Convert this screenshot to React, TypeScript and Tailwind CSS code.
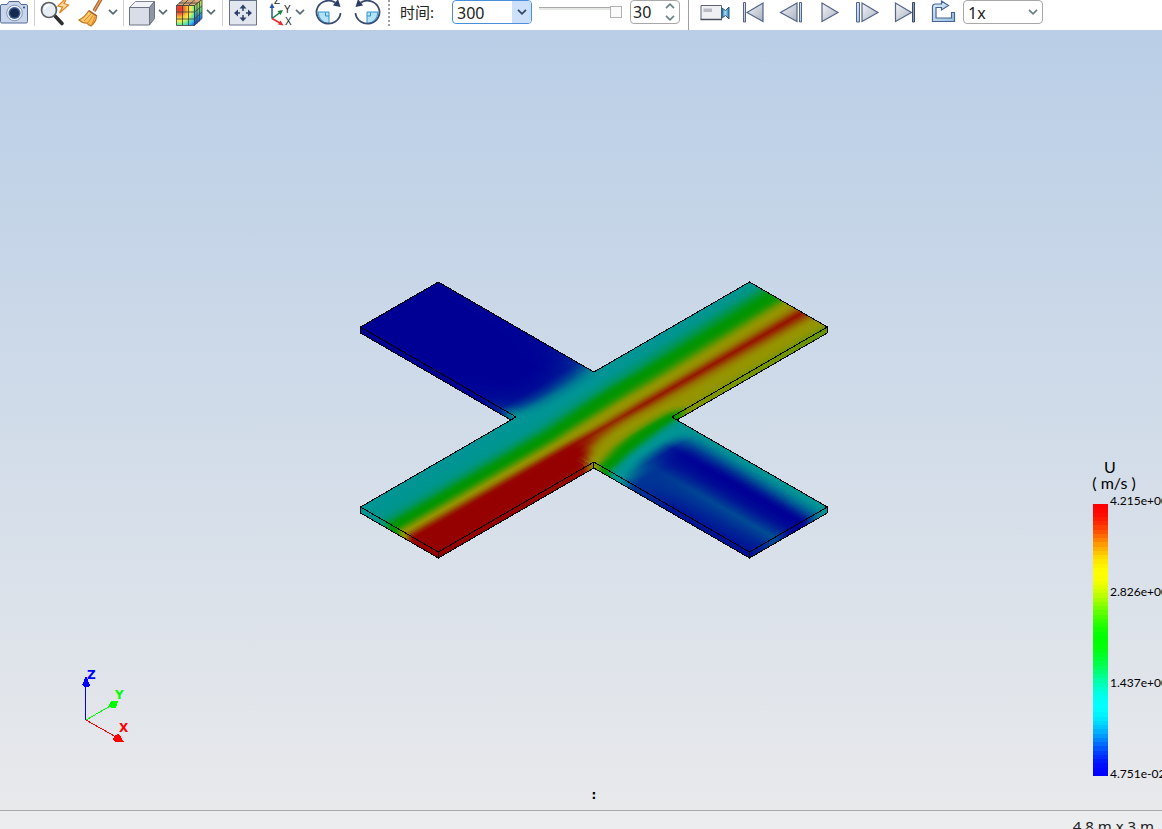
import React from "react";

/* ------------------------------------------------------------------ */
/* Colour map                                                          */
/* ------------------------------------------------------------------ */

function ease(x: number): number {
  return 0.15 * x + 0.85 * (0.5 - 0.5 * Math.cos(Math.PI * x));
}

function rainbow(t: number, peak: number): string {
  const s = Math.max(0, Math.min(1, t)) * 4;
  const seg = Math.min(3, Math.floor(s));
  const f = ease(s - seg);
  const rgb = [
    [0, f, 1],
    [0, 1, 1 - f],
    [f, 1, 0],
    [1, 1 - f, 0],
  ][seg];
  return `rgb(${rgb.map((c) => Math.round(c * peak)).join(",")})`;
}

/* ------------------------------------------------------------------ */
/* Velocity field, tabulated along the inlet channel (u) and across (v) */
/* ------------------------------------------------------------------ */

const CHANNEL_V = [0, 12, 24, 32, 38, 45, 52, 60, 68, 76, 84, 92, 97, 102];
const INLET = [0.26, 0.27, 0.29, 0.35, 0.44, 0.53, 0.66, 0.84, 0.98, 1, 1, 1, 1, 1];
const NEAR_JUNCTION = [0.25, 0.26, 0.29, 0.37, 0.45, 0.53, 0.65, 0.81, 0.97, 1, 1, 1, 0.97, 0.95];
const AFTER_JUNCTION = [0.25, 0.27, 0.35, 0.46, 0.52, 0.6, 0.71, 0.81, 0.94, 0.83, 0.77, 0.74, 0.72, 0.68];
const OUTLET = [0.26, 0.32, 0.44, 0.52, 0.57, 0.68, 0.76, 0.84, 0.95, 0.86, 0.77, 0.73, 0.69, 0.63];

const CENTRE_U = [200, 215, 232, 250, 265, 280, 300];
const CENTRE: [number, number[]][] = [
  [-200, [0, 0, 0, 0, 0, 0, 0]],
  [-90, [0, 0, 0, 0, 0, 0, 0.02]],
  [-45, [0.03, 0.02, 0, 0, 0, 0.02, 0.05]],
  [-20, [0.08, 0.05, 0.04, 0.04, 0.05, 0.06, 0.09]],
  [-8, [0.18, 0.13, 0.11, 0.11, 0.12, 0.13, 0.16]],
  [0, [0.23, 0.2, 0.18, 0.18, 0.18, 0.19, 0.21]],
  [12, [0.26, 0.25, 0.25, 0.25, 0.25, 0.25, 0.26]],
  [24, [0.29, 0.3, 0.31, 0.32, 0.33, 0.34, 0.35]],
  [32, [0.37, 0.38, 0.4, 0.42, 0.44, 0.45, 0.46]],
  [38, [0.45, 0.46, 0.48, 0.49, 0.5, 0.51, 0.52]],
  [45, [0.53, 0.55, 0.56, 0.57, 0.58, 0.59, 0.6]],
  [52, [0.65, 0.67, 0.68, 0.69, 0.7, 0.71, 0.71]],
  [60, [0.81, 0.8, 0.79, 0.79, 0.8, 0.8, 0.81]],
  [68, [0.97, 0.95, 0.93, 0.92, 0.92, 0.93, 0.94]],
  [76, [1, 0.92, 0.86, 0.83, 0.82, 0.82, 0.83]],
  [84, [0.97, 0.83, 0.77, 0.75, 0.75, 0.76, 0.76]],
  [92, [0.86, 0.76, 0.72, 0.68, 0.66, 0.65, 0.65]],
  [97, [0.79, 0.71, 0.64, 0.57, 0.54, 0.53, 0.54]],
  [102, [0.73, 0.64, 0.54, 0.51, 0.49, 0.48, 0.46]],
  [108, [0.6, 0.53, 0.48, 0.43, 0.39, 0.35, 0.32]],
  [114, [0.51, 0.45, 0.36, 0.31, 0.28, 0.27, 0.28]],
  [120, [0.39, 0.32, 0.26, 0.24, 0.23, 0.24, 0.27]],
  [128, [0.27, 0.24, 0.18, 0.15, 0.14, 0.18, 0.26]],
  [136, [0.22, 0.17, 0.12, 0.08, 0.06, 0.13, 0.25]],
  [150, [0.1, 0.1, 0.1, 0.05, 0.02, 0.11, 0.25]],
  [200, [0.06, 0.09, 0.12, 0.05, 0, 0.11, 0.26]],
  [300, [0.05, 0.08, 0.13, 0.05, 0, 0.13, 0.27]],
];

function lookup(xs: number[], ys: number[], x: number): number {
  if (x <= xs[0]) return ys[0];
  for (let i = 1; i < xs.length; i++) {
    if (x <= xs[i]) {
      const f = (x - xs[i - 1]) / (xs[i] - xs[i - 1]);
      return ys[i - 1] + f * (ys[i] - ys[i - 1]);
    }
  }
  return ys[ys.length - 1];
}

function centre(u: number, v: number): number {
  return lookup(
    CENTRE.map((r) => r[0]),
    CENTRE.map((r) => lookup(CENTRE_U, r[1], u)),
    v,
  );
}

function field(u: number, v: number): number {
  if (u >= 200 && u <= 300) return centre(u, v);
  if (u < 200) {
    const rows = [lookup(CHANNEL_V, INLET, v), lookup(CHANNEL_V, NEAR_JUNCTION, v), centre(200, v)];
    return lookup([0, 186, 200], rows, u);
  }
  const rows = [centre(300, v), lookup(CHANNEL_V, AFTER_JUNCTION, v), lookup(CHANNEL_V, OUTLET, v)];
  return lookup([300, 322, 500], rows, u);
}

/* ------------------------------------------------------------------ */
/* Cross-shaped duct in isometric projection                           */
/* ------------------------------------------------------------------ */

const ORIGIN = { x: 8.5, y: 231 };
const DEPTH = 6;
const SX = 0.778;
const SY = 0.45;

function project(u: number, v: number) {
  return { x: ORIGIN.x + SX * (u + v), y: ORIGIN.y + SY * (v - u) };
}

interface Strip {
  u: number;
  width: number;
  from: number;
  to: number;
}

const STRIPS: Strip[] = [];
for (let u = 0; u < 200; u += 5) STRIPS.push({ u, width: 5, from: 0, to: 100 });
for (let u = 200; u < 300; u += 2) STRIPS.push({ u, width: 2, from: -200, to: 300 });
for (let u = 300; u < 500; u += 5) STRIPS.push({ u, width: 5, from: 0, to: 100 });

const WALLS: [number, number, number, number][] = [
  [200, -200, 200, 0],
  [300, 100, 500, 100],
  [0, 0, 0, 100],
  [0, 100, 200, 100],
  [200, 100, 200, 300],
  [200, 300, 300, 300],
];

const OUTLINE: [number, number][] = [
  [0, 0], [200, 0], [200, -200], [300, -200], [300, 0], [500, 0],
  [500, 100], [300, 100], [300, 300], [200, 300], [200, 100], [0, 100],
];

function range(n: number) {
  return Array.from({ length: n }, (_, i) => i);
}

function DuctModel() {
  return (
    <svg width="484" height="288" viewBox="0 0 484 288" role="img" aria-label="U" className="block shrink-0">
      <defs>
        {STRIPS.map((s) => {
          const n = (s.to - s.from) / 4;
          return (
            <linearGradient key={s.u} id={`strip${s.u}`} x1="0" y1="0" x2="0" y2="1">
              {range(n + 1).map((i) => (
                <stop
                  key={i}
                  offset={i / n}
                  stopColor={rainbow(field(s.u + s.width / 2, s.from + ((s.to - s.from) * i) / n), 149)}
                />
              ))}
            </linearGradient>
          );
        })}
        {WALLS.map(([u0, v0, u1, v1], k) => {
          const a = project(u0, v0);
          const b = project(u1, v1);
          return (
            <linearGradient key={k} id={`wall${k}`} gradientUnits="userSpaceOnUse" x1={a.x} y1="0" x2={b.x} y2="0">
              {range(41).map((i) => (
                <stop
                  key={i}
                  offset={i / 40}
                  stopColor={rainbow(field(u0 + ((u1 - u0) * i) / 40, v0 + ((v1 - v0) * i) / 40), 149)}
                />
              ))}
            </linearGradient>
          );
        })}
      </defs>
      {WALLS.map(([u0, v0, u1, v1], k) => {
        const a = project(u0, v0);
        const b = project(u1, v1);
        return (
          <polygon
            key={k}
            points={`${a.x},${a.y} ${b.x},${b.y} ${b.x},${b.y + DEPTH} ${a.x},${a.y + DEPTH}`}
            fill={`url(#wall${k})`}
            stroke="#000"
            shapeRendering="crispEdges"
          />
        );
      })}
      <g transform={`matrix(${SX} ${-SY} ${SX} ${SY} ${ORIGIN.x} ${ORIGIN.y})`} shapeRendering="crispEdges">
        {STRIPS.map((s) => (
          <rect
            key={s.u}
            x={s.u}
            y={s.from}
            width={s.u + s.width === 500 || s.u + s.width === 300 ? s.width : s.width + 1}
            height={s.to - s.from}
            fill={`url(#strip${s.u})`}
          />
        ))}
      </g>
      <polygon
        points={OUTLINE.map(([u, v]) => {
          const p = project(u, v);
          return `${p.x},${p.y}`;
        }).join(" ")}
        fill="none"
        stroke="#000"
        shapeRendering="crispEdges"
      />
    </svg>
  );
}

function AxisTriad() {
  return (
    <svg
      width="60"
      height="84"
      viewBox="76 666 60 84"
      className="absolute bottom-[60px] left-[76px]"
      fontFamily='"DejaVu Sans", sans-serif'
      fontWeight="bold"
      fontSize="12"
    >
      <g shapeRendering="crispEdges">
        <path d="M85.5 720V684" stroke="#00f" />
        <path d="M86 676l4 9-2 2h-4l-2-2z" fill="#00f" />
        <path d="M86 720L112 705" stroke="#0f0" />
        <path d="M118 701l-7 0-2 4 2 3h5z" fill="#0f0" />
        <path d="M86 720L116 737" stroke="#f00" />
        <path d="M124 742l-5-8-4 1-2 4 2 3z" fill="#f00" />
      </g>
      <text x="87" y="679" fill="#00f">Z</text>
      <text x="115" y="699" fill="#0f0">Y</text>
      <text x="119" y="732" fill="#f00">X</text>
    </svg>
  );
}

const LEGEND_LABELS = ["4.215e+00", "2.826e+00", "1.437e+00", "4.751e-02"];

function Legend() {
  return (
    <div className="absolute right-0 bottom-7 w-[100px] pl-[5px] font-['Lato',sans-serif] text-black">
      <div className="-ml-1 w-[50px] text-center text-base leading-4">
        <div className="pr-2">U</div>
        <div className="whitespace-nowrap">( m/s )</div>
      </div>
      <div className="mt-0.5 flex gap-0.5">
        <svg width="15" height="272" viewBox="0 0 15 64" preserveAspectRatio="none" className="mt-[11px] shrink-0">
          {range(64).map((i) => (
            <rect key={i} x="0" y={i} width="15" height="1.1" fill={rainbow(1 - i / 63, 255)} shapeRendering="crispEdges" />
          ))}
        </svg>
        <div className="flex h-[289px] flex-col justify-between text-xs leading-4">
          {LEGEND_LABELS.map((l) => (
            <span key={l}>{l}</span>
          ))}
        </div>
      </div>
    </div>
  );
}

/* ------------------------------------------------------------------ */
/* Toolbar                                                             */
/* ------------------------------------------------------------------ */

interface ToolProps {
  label: string;
  x: number;
  width: number;
  children: React.ReactNode;
}

function Tool({ label, x, width, children }: ToolProps) {
  return (
    <button type="button" aria-label={label} className="block shrink-0">
      <svg width={width} height="27" viewBox={`${x} 0 ${width} 27`} fill="none" className="block">
        {children}
      </svg>
    </button>
  );
}

function Chevron({ className = "" }: { className?: string }) {
  return (
    <svg width="10" height="6" viewBox="0 0 10 6" fill="none" className={className}>
      <path d="M1 .8l4 4 4-4" stroke="currentColor" strokeWidth="1.7" />
    </svg>
  );
}

function MenuArrow({ label }: { label: string }) {
  return (
    <button type="button" aria-label={label} className="flex h-6 w-4 shrink-0 items-center justify-start pl-0.5 text-[#566a74]">
      <Chevron />
    </button>
  );
}

function Separator() {
  return <div className="h-[26px] w-px shrink-0 bg-[#cfcfcf]" />;
}

function Toolbar() {
  return (
    <header className="flex h-[30px] shrink-0 items-start overflow-hidden bg-white font-['Noto_Sans','Noto_Sans_CJK_SC',sans-serif] text-base text-[#222]">
      <svg width="0" height="0" className="absolute">
        <defs>
          <linearGradient id="steel" x1="0" y1="0" x2="1" y2="1">
            <stop offset="0" stopColor="#f4f5f8" />
            <stop offset="1" stopColor="#a9b0bf" />
          </linearGradient>
          <linearGradient id="ice" x1="0" y1="0" x2="1" y2="1">
            <stop offset="0" stopColor="#e4f0fa" />
            <stop offset="1" stopColor="#94bfe2" />
          </linearGradient>
          <radialGradient id="cubeFront" gradientUnits="userSpaceOnUse" cx="179" cy="9" r="22">
            <stop offset="0" stopColor="#e83028" />
            <stop offset="0.2" stopColor="#f05a38" />
            <stop offset="0.4" stopColor="#fcc830" />
            <stop offset="0.55" stopColor="#f0f050" />
            <stop offset="0.7" stopColor="#70e890" />
            <stop offset="0.85" stopColor="#30c0f0" />
            <stop offset="1" stopColor="#2050e0" />
          </radialGradient>
          <linearGradient id="cubeSide" x1="0" y1="0" x2="0" y2="1">
            <stop offset="0" stopColor="#e0e040" />
            <stop offset="0.4" stopColor="#58d878" />
            <stop offset="0.65" stopColor="#2090e8" />
            <stop offset="1" stopColor="#1030d0" />
          </linearGradient>
          <linearGradient id="straw" x1="0" y1="0" x2="1" y2="1">
            <stop offset="0" stopColor="#ffe08a" />
            <stop offset="1" stopColor="#f5a93c" />
          </linearGradient>
          <linearGradient id="lens" x1="0" y1="0" x2="1" y2="0">
            <stop offset="0" stopColor="#2a6ea0" />
            <stop offset="0.45" stopColor="#a8e0f8" />
            <stop offset="1" stopColor="#2a78b0" />
          </linearGradient>
        </defs>
      </svg>

      <div className="flex shrink-0">
        <Tool label="截图" x={0} width={34}>
          <path d="M2 4.5h5l2-3h10l2 3h5q1.500 0 1.500 1.500v15.500q0 1.500-1.500 1.500H2q-1.500 0-1.500-1.500V6q0-1.500 1.500-1.500z" fill="#c8d5ea" stroke="#526b96" />
          <circle cx="14.5" cy="13" r="7.8" fill="#eef3fa" stroke="#7f94b8" />
          <circle cx="14.5" cy="13" r="6" fill="#3c5c90" />
          <circle cx="14.5" cy="13" r="4.5" fill="#16294e" />
          <circle cx="24" cy="7.5" r="1" fill="#2b4470" />
        </Tool>
        <Separator />
        <Tool label="缩放" x={35} width={41}>
          <path d="M66 -2l-8 8 4.500 1-3 6 9-8-4.500-1.500 3-5.500z" fill="#ffd9a0" stroke="#e08a28" strokeWidth="1.3" />
          <path d="M55 16l7 7.500" stroke="#2d2d2d" strokeWidth="3.6" strokeLinecap="round" />
          <circle cx="49" cy="10" r="7.5" fill="#e6edf5" stroke="#5c6066" strokeWidth="1.7" />
          <path d="M44.500 9q1.500-4 5-4" stroke="#fff" strokeWidth="1.8" />
        </Tool>
        <Tool label="清除" x={76} width={30}>
          <path d="M101 -1L94 11" stroke="#a8622c" strokeWidth="3.5" />
          <path d="M101 -1L94 11" stroke="#e8a868" strokeWidth="1.3" />
          <path d="M88.500 11l8 5q0 5.500-5.500 10-3-1-4-3-4.500.500-8-3 6-3 9.500-9z" fill="url(#straw)" stroke="#c2761c" strokeWidth="1.2" />
          <path d="M91 14l-7 7M93 15.500l-5.500 8M95 16.500l-3 8" stroke="#d98a2a" />
          <path d="M89 10.500l8 5.500" stroke="#a8622c" strokeWidth="1.5" />
        </Tool>
        <MenuArrow label="清除选项" />
        <div className="w-px shrink-0" />
        <Separator />
        <Tool label="显示方式" x={124} width={32}>
          <path d="M129.500 7.500l6-6h19l-5 6z" fill="#f1f3f8" stroke="#7d8494" />
          <path d="M149.500 7.500l5-6v17l-5 6.500z" fill="#8d95a6" stroke="#6b7282" />
          <path d="M129.500 7.500h20v17.500h-20z" fill="#d9dde8" stroke="#6b7282" />
        </Tool>
        <MenuArrow label="显示方式选项" />
        <Tool label="云图" x={172} width={32}>
          <path d="M176.500 5.500l7-6h18.500l-7 6z" fill="#d8a878" stroke="#3c3c3c" strokeWidth=".8" />
          <path d="M176.500 5.500h18v20h-18z" fill="url(#cubeFront)" />
          <path d="M194.500 5.500l7.500-6v19l-7.500 7z" fill="url(#cubeSide)" stroke="#3c3c3c" strokeWidth=".8" />
          <path d="M176.500 5.500h18v20h-18zM182.500 5.500v20M188.500 5.500v20M176.500 12h18l7.500-6M176.500 19h18l7.500-7M197 3.500v20M199.500 1.500v20M182.500 5.500l6-6M188.500 5.500l6.500-6M179 3h19" stroke="#3c3c3c" strokeWidth=".8" />
        </Tool>
        <MenuArrow label="云图选项" />
        <div className="w-0.5 shrink-0" />
        <Separator />
        <Tool label="适应窗口" x={223} width={42}>
          <path d="M229.500 -1h27v26h-27z" fill="#e2e6ef" stroke="#66718a" />
          <path d="M229.500 .5h27" stroke="#66718a" />
          <path d="M243 4.500l3.500 4h-7zM243 21.500l3.500-4h-7zM234 13l4-3.500v7zM252 13l-4-3.500v7z" fill="#2d4068" />
          <path d="M243 7v4M243 15v4M236 13h4M246 13h4" stroke="#2d4068" strokeWidth="1.5" />
        </Tool>
        <Tool label="视图方向" x={265} width={28}>
          <path d="M272 18.500V6" stroke="#2a55a8" strokeWidth="1.5" />
          <path d="M272 3l2.500 5h-5z" fill="#2a55a8" />
          <path d="M272 18.500l8-6" stroke="#12803c" strokeWidth="1.5" />
          <path d="M283 10l-5.500 1 3 4z" fill="#12803c" />
          <path d="M272 18.500l8 4.500" stroke="#e82828" strokeWidth="1.5" />
          <path d="M283.500 25.500l-5.500-1 2.500-4z" fill="#e82828" />
          <g fill="#222" fontFamily='"Liberation Sans", sans-serif' fontSize="10">
            <text x="274" y="4">Z</text>
            <text x="284" y="13">Y</text>
            <text x="285" y="25">X</text>
          </g>
        </Tool>
        <MenuArrow label="视图方向选项" />
        <Tool label="顺时针旋转" x={309} width={37}>
          <path d="M318 12h11v11.500q-10-1-11-11.500z" fill="#b4e2f8" stroke="#2c96cc" />
          <path d="M325.500 12.500v3.500h3.500" stroke="#2c96cc" />
          <path d="M340.500 13A12 11.500 0 1 1 335.500 2.800" stroke="#3b4c74" strokeWidth="1.8" />
          <path d="M333 5.500l7.500 1.500L338-1z" fill="#2c3c66" />
        </Tool>
        <Tool label="逆时针旋转" x={346} width={42}>
          <path d="M378 12h-11v11.500q10-1 11-11.500z" fill="#b4e2f8" stroke="#2c96cc" />
          <path d="M370.500 12.500v3.500h-3.500" stroke="#2c96cc" />
          <path d="M355.500 13A12 11.500 0 1 0 360.500 2.800" stroke="#3b4c74" strokeWidth="1.8" />
          <path d="M363 5.500l-7.500 1.500L358-1z" fill="#2c3c66" />
        </Tool>
        <div className="h-[26px] shrink-0 border-l-2 border-dotted border-[#a0a0a0]" />
      </div>

      <div className="flex shrink-0 items-center">
        <label htmlFor="time" className="ml-2.5 w-[52px] text-[15px] leading-6">时间:</label>
        <div className="relative h-6 w-20 overflow-hidden rounded-sm border border-[#4a90d9] bg-white">
          <select id="time" className="block h-full w-full appearance-none bg-transparent pl-1 leading-6 outline-none" defaultValue="300">
            <option>300</option>
          </select>
          <span className="pointer-events-none absolute inset-y-0 right-0 flex w-[19px] items-center justify-center bg-[#cce0fc] text-[#34465c]">
            <Chevron />
          </span>
        </div>
        <input
          type="range"
          aria-label="时间步"
          min={0}
          max={30}
          defaultValue={30}
          className="mt-[7px] ml-[7px] h-[3px] w-[83px] appearance-none self-start bg-transparent [&::-webkit-slider-runnable-track]:h-[3px] [&::-webkit-slider-runnable-track]:border-t [&::-webkit-slider-runnable-track]:border-[#a8a8a8] [&::-webkit-slider-runnable-track]:bg-[#e6e8e6] [&::-webkit-slider-thumb]:-mt-0.5 [&::-webkit-slider-thumb]:h-3 [&::-webkit-slider-thumb]:w-3 [&::-webkit-slider-thumb]:appearance-none [&::-webkit-slider-thumb]:border [&::-webkit-slider-thumb]:border-[#b0b0b0] [&::-webkit-slider-thumb]:bg-[#fafafa]"
        />
        <div className="ml-2 flex h-6 w-[50px] items-center rounded-sm border border-[#a8a8a8] bg-white">
          <input aria-label="步数" inputMode="numeric" defaultValue="30" className="h-full w-[34px] min-w-0 bg-transparent pl-0.5 leading-6 outline-none" />
          <div className="flex flex-col gap-1.5 text-[#6c8288]">
            <button type="button" aria-label="增加" className="block"><Chevron className="block rotate-180" /></button>
            <button type="button" aria-label="减少" className="block"><Chevron className="block" /></button>
          </div>
        </div>
      </div>

      <div className="ml-2 h-[30px] w-px shrink-0 bg-[#a0a0a0]" />

      <div className="flex shrink-0">
        <Tool label="录制" x={689} width={48}>
          <path d="M701 5.500h20.500v14H701z" fill="#eef0f3" stroke="#5c6270" />
          <path d="M700.500 19.500h21.500" stroke="#4a505c" strokeWidth="1.5" />
          <path d="M703.500 8.500h8.500v3.500h-8.500z" fill="#b8bcc2" />
          <path d="M721.500 7.500q3 2 3 5t-3 5z" fill="#3c6c98" />
          <path d="M722 8l3.500 2.500 3.500-3.500v12l-3.500-3.500-3.500 2.500z" fill="url(#lens)" stroke="#2a5a80" />
        </Tool>
        <Tool label="第一帧" x={737} width={36}>
          <path d="M743.500 2.500h2v19.500h-2z" fill="url(#steel)" stroke="#54648a" />
          <path d="M763 3v18.500L747 12.500z" fill="url(#steel)" stroke="#54648a" strokeWidth="1.2" />
        </Tool>
        <Tool label="上一帧" x={773} width={38}>
          <path d="M797 3v18.500L780.500 12.500z" fill="url(#steel)" stroke="#54648a" strokeWidth="1.2" />
          <path d="M799.500 2.500h2v19.500h-2z" fill="url(#ice)" stroke="#54648a" />
        </Tool>
        <Tool label="播放" x={811} width={36}>
          <path d="M822 3v18.500l16-9z" fill="url(#steel)" stroke="#54648a" strokeWidth="1.2" />
        </Tool>
        <Tool label="下一帧" x={847} width={39}>
          <path d="M856.500 2.500h3v19.500h-3z" fill="url(#ice)" stroke="#54648a" />
          <path d="M862 3v18.500l16-9z" fill="url(#steel)" stroke="#54648a" strokeWidth="1.2" />
        </Tool>
        <Tool label="最后一帧" x={886} width={37}>
          <path d="M895.500 3v18.500l16-9z" fill="url(#steel)" stroke="#54648a" strokeWidth="1.2" />
          <path d="M912.500 2.500h2v19.500h-2z" fill="#8e9cb8" stroke="#3c4a6c" />
        </Tool>
        <Tool label="循环" x={923} width={40}>
          <path d="M932.500 21.500V7q0-3 3-3h6V1l7 4.500-7 4.500V7.500h-5.500v10.500h15.500v-5.500h3v9z" fill="url(#ice)" stroke="#456490" strokeWidth="1.2" />
        </Tool>
      </div>

      <div className="relative h-6 w-20 shrink-0 overflow-hidden rounded-sm border border-[#a8a8a8] bg-white">
        <select aria-label="播放速度" className="block h-full w-full appearance-none bg-transparent pl-1 leading-6 outline-none" defaultValue="1x">
          <option>1x</option>
        </select>
        <Chevron className="pointer-events-none absolute top-2 right-1 text-[#6c8288]" />
      </div>
    </header>
  );
}

export default function App() {
  return (
    <div className="flex h-screen min-h-96 flex-col overflow-hidden">
      <Toolbar />
      <main className="min-h-0 flex-1 overflow-hidden bg-linear-to-b from-[#b9cee6] to-[#e8e9eb]">
        <div className="relative flex h-full w-[calc(100%+26px)] items-center justify-center">
          <DuctModel />
          <AxisTriad />
          <Legend />
          <div className="absolute bottom-[7px] left-1/2 -translate-x-1/2 font-['DejaVu_Sans',sans-serif] text-xs leading-4 font-bold text-black">
            :
          </div>
        </div>
      </main>
      <footer className="h-[19px] shrink-0 overflow-hidden border-t border-[#a6aaaa] bg-[#ecedee] pt-[5px] pr-2 text-right font-['Noto_Sans',sans-serif] text-[15px] leading-5 text-[#222]">
        4.8 m x 3 m
      </footer>
    </div>
  );
}
